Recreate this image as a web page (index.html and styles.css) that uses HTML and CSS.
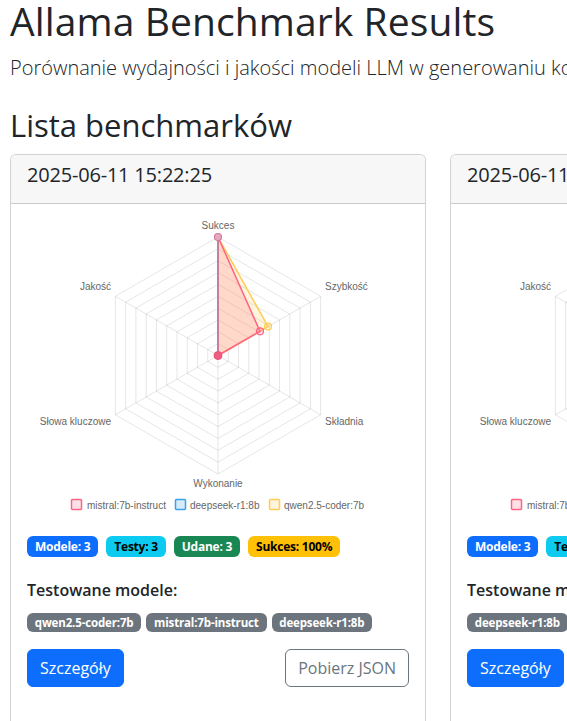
FILE: index.html
```html
<!DOCTYPE html>
<html lang="pl">
<head>
<meta charset="utf-8">
<title>Allama Benchmark Results</title>
<link rel="stylesheet" href="styles.css">
</head>
<body>
<div class="page">
  <h1 class="title">Allama Benchmark Results</h1>
  <p class="lead">Porównanie wydajności i jakości modeli LLM w generowaniu kodu</p>
  <h2 class="section-title">Lista benchmarków</h2>
  <div class="cards">
    <div class="card">
      <div class="card-header"><h5 class="card-title">2025-06-11 15:22:25</h5></div>
      <div class="card-body">
        <svg class="radar" width="382" height="300" viewBox="0 0 382 300">
          <defs>
            <g id="radar-grid">
              <g transform="translate(191 135.5)" fill="none" stroke="rgba(0,0,0,0.1)" stroke-width="1">
                <polygon points="0,-11.85 10.26,-5.93 10.26,5.93 0,11.85 -10.26,5.93 -10.26,-5.93"/>
                <polygon points="0,-23.7 20.52,-11.85 20.52,11.85 0,23.7 -20.52,11.85 -20.52,-11.85"/>
                <polygon points="0,-35.55 30.79,-17.78 30.79,17.78 0,35.55 -30.79,17.78 -30.79,-17.78"/>
                <polygon points="0,-47.4 41.05,-23.7 41.05,23.7 0,47.4 -41.05,23.7 -41.05,-23.7"/>
                <polygon points="0,-59.25 51.31,-29.63 51.31,29.63 0,59.25 -51.31,29.63 -51.31,-29.63"/>
                <polygon points="0,-71.1 61.57,-35.55 61.57,35.55 0,71.1 -61.57,35.55 -61.57,-35.55"/>
                <polygon points="0,-82.95 71.84,-41.48 71.84,41.48 0,82.95 -71.84,41.48 -71.84,-41.48"/>
                <polygon points="0,-94.8 82.1,-47.4 82.1,47.4 0,94.8 -82.1,47.4 -82.1,-47.4"/>
                <polygon points="0,-106.65 92.36,-53.33 92.36,53.33 0,106.65 -92.36,53.33 -92.36,-53.33"/>
                <polygon points="0,-118.5 102.62,-59.25 102.62,59.25 0,118.5 -102.62,59.25 -102.62,-59.25"/>
                <line x1="0" y1="0" x2="0" y2="-118.5"/>
                <line x1="0" y1="0" x2="102.62" y2="-59.25"/>
                <line x1="0" y1="0" x2="102.62" y2="59.25"/>
                <line x1="0" y1="0" x2="0" y2="118.5"/>
                <line x1="0" y1="0" x2="-102.62" y2="59.25"/>
                <line x1="0" y1="0" x2="-102.62" y2="-59.25"/>
              </g>
              <g class="axis-label">
                <text x="191" y="9" text-anchor="middle">Sukces</text>
                <text x="298" y="70">Szybkość</text>
                <text x="298" y="205">Składnia</text>
                <text x="191" y="266.5" text-anchor="middle">Wykonanie</text>
                <text x="84" y="205" text-anchor="end">Słowa kluczowe</text>
                <text x="84" y="70" text-anchor="end">Jakość</text>
              </g>
              <g class="legend">
                <rect x="44.5" y="279.5" width="10" height="10" rx="1" fill="rgba(255,99,132,0.2)" stroke="rgb(255,99,132)" stroke-width="1.5"/>
                <text x="60" y="288.5">mistral:7b-instruct</text>
                <rect x="148.5" y="279.5" width="10" height="10" rx="1" fill="rgba(54,162,235,0.2)" stroke="rgb(54,162,235)" stroke-width="1.5"/>
                <text x="163" y="288.5">deepseek-r1:8b</text>
                <rect x="242.5" y="279.5" width="10" height="10" rx="1" fill="rgba(255,205,86,0.2)" stroke="rgb(255,205,86)" stroke-width="1.5"/>
                <text x="257" y="288.5">qwen2.5-coder:7b</text>
              </g>
            </g>
          </defs>
          <use href="#radar-grid"/>
          <g transform="translate(191 135.5)">
            <polygon points="0,-118.5 50.1,-28.9 0,0" fill="rgba(255,205,86,0.2)" stroke="rgb(255,205,86)" stroke-width="1.5" stroke-linejoin="round"/>
            <polygon points="0,-118.5 42,-24.2 0,0" fill="rgba(255,99,132,0.2)" stroke="rgb(255,99,132)" stroke-width="1.5" stroke-linejoin="round"/>
            <line x1="0" y1="0" x2="0" y2="-118.5" stroke="#c47fa6" stroke-width="2"/>
            <circle cx="50.1" cy="-28.9" r="3.5" fill="rgba(255,205,86,0.3)" stroke="rgb(255,205,86)" stroke-width="1.2"/>
            <circle cx="42" cy="-24.2" r="3.5" fill="rgba(255,99,132,0.25)" stroke="rgb(255,99,132)" stroke-width="1.2"/>
            <circle cx="0" cy="-118.5" r="3.5" fill="#e6aac0" stroke="#cf7b9f" stroke-width="1.2"/>
            <circle cx="0" cy="0" r="4" fill="#ef5d80" stroke="#e9507a" stroke-width="1"/>
          </g>
        </svg>
        <div class="stats">
          <span class="badge badge-primary">Modele: 3</span>
          <span class="badge badge-info">Testy: 3</span>
          <span class="badge badge-success">Udane: 3</span>
          <span class="badge badge-warning">Sukces: 100%</span>
        </div>
        <h6 class="models-title">Testowane modele:</h6>
        <div class="models">
          <span class="badge badge-secondary">qwen2.5-coder:7b</span>
          <span class="badge badge-secondary">mistral:7b-instruct</span>
          <span class="badge badge-secondary">deepseek-r1:8b</span>
        </div>
        <div class="actions">
          <a class="btn btn-primary">Szczegóły</a>
          <a class="btn btn-outline">Pobierz JSON</a>
        </div>
      </div>
    </div>
    <div class="card">
      <div class="card-header"><h5 class="card-title">2025-06-11 14:58:03</h5></div>
      <div class="card-body">
        <svg class="radar" width="382" height="300" viewBox="0 0 382 300">
          <use href="#radar-grid"/>
          <g transform="translate(191 135.5)">
            <polygon points="0,-118.5 30.8,-17.8 0,0" fill="rgba(255,99,132,0.2)" stroke="rgb(255,99,132)" stroke-width="1.5"/>
            <circle cx="0" cy="0" r="4" fill="#ef5d80"/>
          </g>
        </svg>
        <div class="stats">
          <span class="badge badge-primary">Modele: 3</span>
          <span class="badge badge-info">Testy: 3</span>
          <span class="badge badge-success">Udane: 3</span>
          <span class="badge badge-warning">Sukces: 100%</span>
        </div>
        <h6 class="models-title">Testowane modele:</h6>
        <div class="models">
          <span class="badge badge-secondary">deepseek-r1:8b</span>
          <span class="badge badge-secondary">qwen2.5-coder:7b</span>
          <span class="badge badge-secondary">mistral:7b-instruct</span>
        </div>
        <div class="actions">
          <a class="btn btn-primary">Szczegóły</a>
          <a class="btn btn-outline">Pobierz JSON</a>
        </div>
      </div>
    </div>
  </div>
</div>
</body>
</html>
```
FILE: styles.css
```css
html {
  overflow: hidden;
}

body {
  margin: 0;
  font-family: "Open Sans", "Noto Sans", sans-serif;
  color: #212529;
  background: #fff;
}

.page {
  padding: 0 10px;
}

.title {
  margin: 0;
  font-size: 39px;
  line-height: 41px;
  font-weight: 400;
  letter-spacing: 0.1px;
  white-space: nowrap;
}

.lead {
  margin: 12px 0 0;
  font-size: 20px;
  line-height: 30px;
  font-weight: 300;
  white-space: nowrap;
}

.section-title {
  margin: 24px 0 11px;
  font-size: 31px;
  line-height: 36px;
  font-weight: 400;
  white-space: nowrap;
}

.cards {
  display: flex;
  gap: 24px;
  width: max-content;
}

.card {
  flex: 0 0 416px;
  width: 416px;
  box-sizing: border-box;
  min-height: 620px;
  border: 1px solid rgba(0, 0, 0, 0.175);
  border-radius: 6px;
  background: #fff;
}

.card-header {
  padding: 8px 16px 17px;
  background: #f7f7f7;
  border-bottom: 1px solid rgba(0, 0, 0, 0.175);
  border-radius: 5px 5px 0 0;
}

.card-title {
  margin: 0;
  font-size: 20px;
  line-height: 23px;
  font-weight: 500;
  letter-spacing: -0.2px;
}

.card-body {
  padding: 16px;
}

.radar {
  display: block;
}

.axis-label text,
.legend text {
  font-family: "Liberation Sans", Arial, sans-serif;
  font-size: 10px;
  fill: #666;
}

.stats {
  display: flex;
  gap: 8px;
  margin-top: 16px;
}

.badge {
  display: inline-block;
  font-size: 12px;
  line-height: 12px;
  font-weight: 700;
  color: #fff;
  border-radius: 6px;
  white-space: nowrap;
}

.stats .badge {
  padding: 4.5px 8px;
  letter-spacing: -0.25px;
}

.badge-primary { background: #0d6efd; }
.badge-info { background: #0dcaf0; color: #000; }
.badge-success { background: #198754; }
.badge-warning { background: #ffc107; color: #000; }
.badge-secondary { background: #6c757d; }

.models-title {
  margin: 24px 0 13px;
  font-size: 16px;
  line-height: 19px;
  font-weight: 600;
}

.models {
  display: flex;
  gap: 5px;
}

.models .badge {
  padding: 3.5px 7.8px;
  font-size: 11.5px;
  letter-spacing: -0.15px;
}

.actions {
  display: flex;
  justify-content: space-between;
  margin-top: 17px;
}

.btn {
  display: inline-block;
  padding: 6px 12px;
  font-size: 16px;
  line-height: 24px;
  font-weight: 400;
  border: 1px solid transparent;
  border-radius: 6px;
}

.btn-primary {
  background: #0d6efd;
  border-color: #0d6efd;
  color: #fff;
}

.btn-outline {
  color: #6c757d;
  border-color: #6c757d;
}
```
